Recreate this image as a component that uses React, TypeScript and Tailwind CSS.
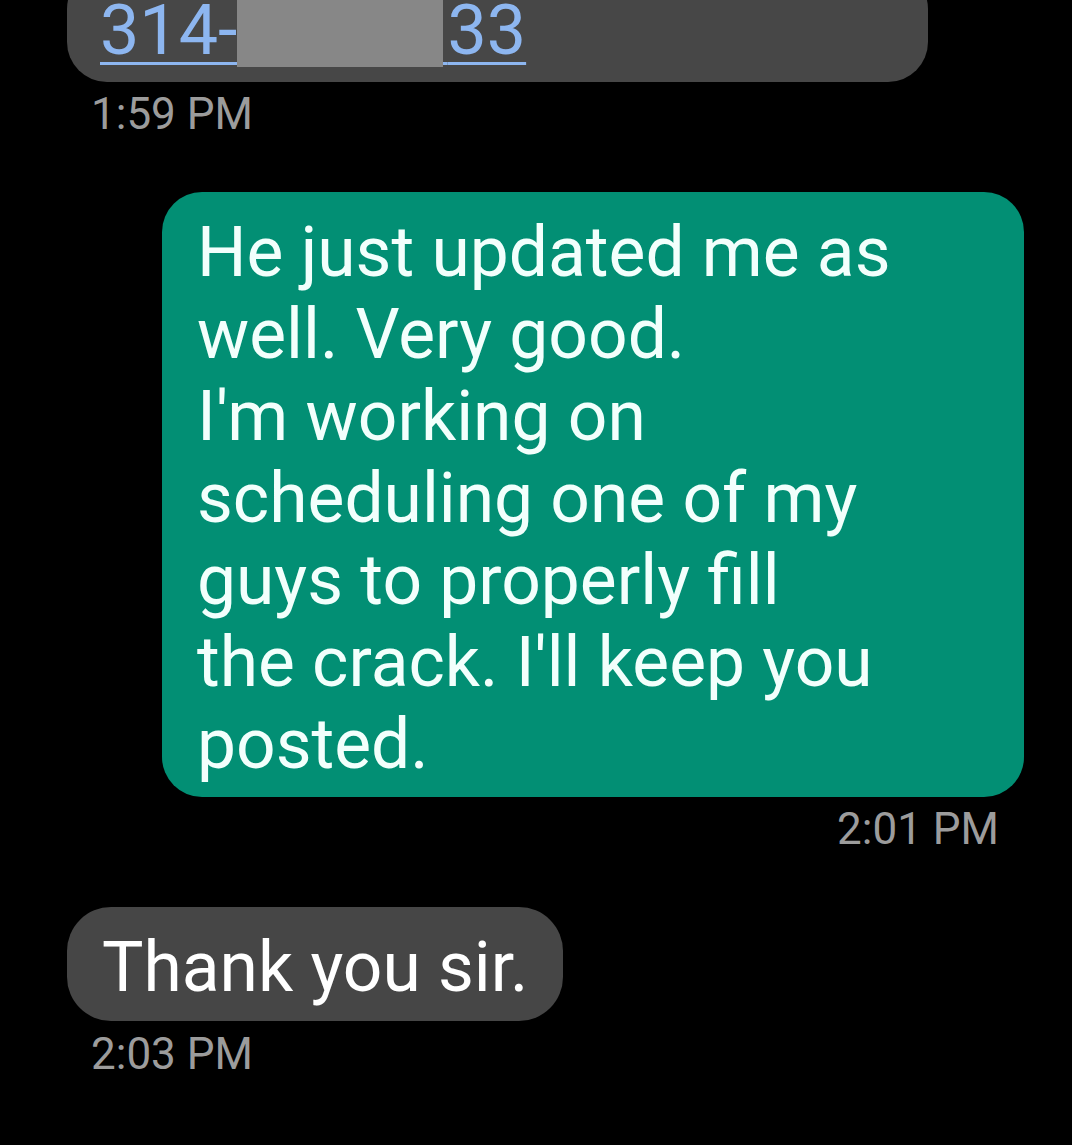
import React from "react";

const greenLines = [
  "He just updated me as",
  "well. Very good.",
  "I'm working on",
  "scheduling one of my",
  "guys to properly fill",
  "the crack. I'll keep you",
  "posted.",
];

export default function App() {
  return (
    <div
      className="w-[1072px] h-[1145px] bg-black overflow-hidden flex flex-col"
      style={{ fontFamily: "Roboto, 'Liberation Sans', sans-serif" }}
    >
      {/* Incoming bubble (cut off at top) */}
      <div className="ml-[67px] w-[861px] mt-[-31px] bg-[#474747] rounded-b-[40px] rounded-t-[40px] pl-[33px] pt-[20px] pb-[11px]">
        <div className="text-[70px] leading-[82px] text-[#8db6f0] whitespace-nowrap">
          <span className="relative underline decoration-[3px] underline-offset-[8px]">
            314-<span className="tracking-[-1px] text-transparent">555-55</span>33
            <span className="absolute left-[137px] top-[-40px] w-[206px] h-[118px] bg-[#878787]" />
          </span>
        </div>
      </div>
      <div className="ml-[91px] mt-[7px] text-[44px] leading-[50px] text-[#9c9c9c]">
        1:59 PM
      </div>

      {/* Outgoing green bubble */}
      <div className="ml-[162px] w-[862px] mt-[53px] bg-[#028f74] rounded-[40px] pl-[35px] pt-[20px] pb-[11px]">
        {greenLines.map((l, i) => (
          <div key={i} className="text-[69.5px] leading-[82px] text-[#f2fffc] whitespace-nowrap">
            {l}
          </div>
        ))}
      </div>
      <div className="self-end mr-[73px] mt-[7px] text-[44px] leading-[50px] text-[#9c9c9c]">
        2:01 PM
      </div>

      {/* Incoming bubble */}
      <div className="self-start ml-[67px] mt-[53px] bg-[#464646] rounded-[44px] pl-[35px] pr-[35px] pt-[20px] pb-[12px]">
        <div className="text-[69.5px] leading-[82px] text-white whitespace-nowrap">Thank you sir.</div>
      </div>
      <div className="ml-[91px] mt-[8px] text-[44px] leading-[50px] text-[#9c9c9c]">
        2:03 PM
      </div>
    </div>
  );
}
